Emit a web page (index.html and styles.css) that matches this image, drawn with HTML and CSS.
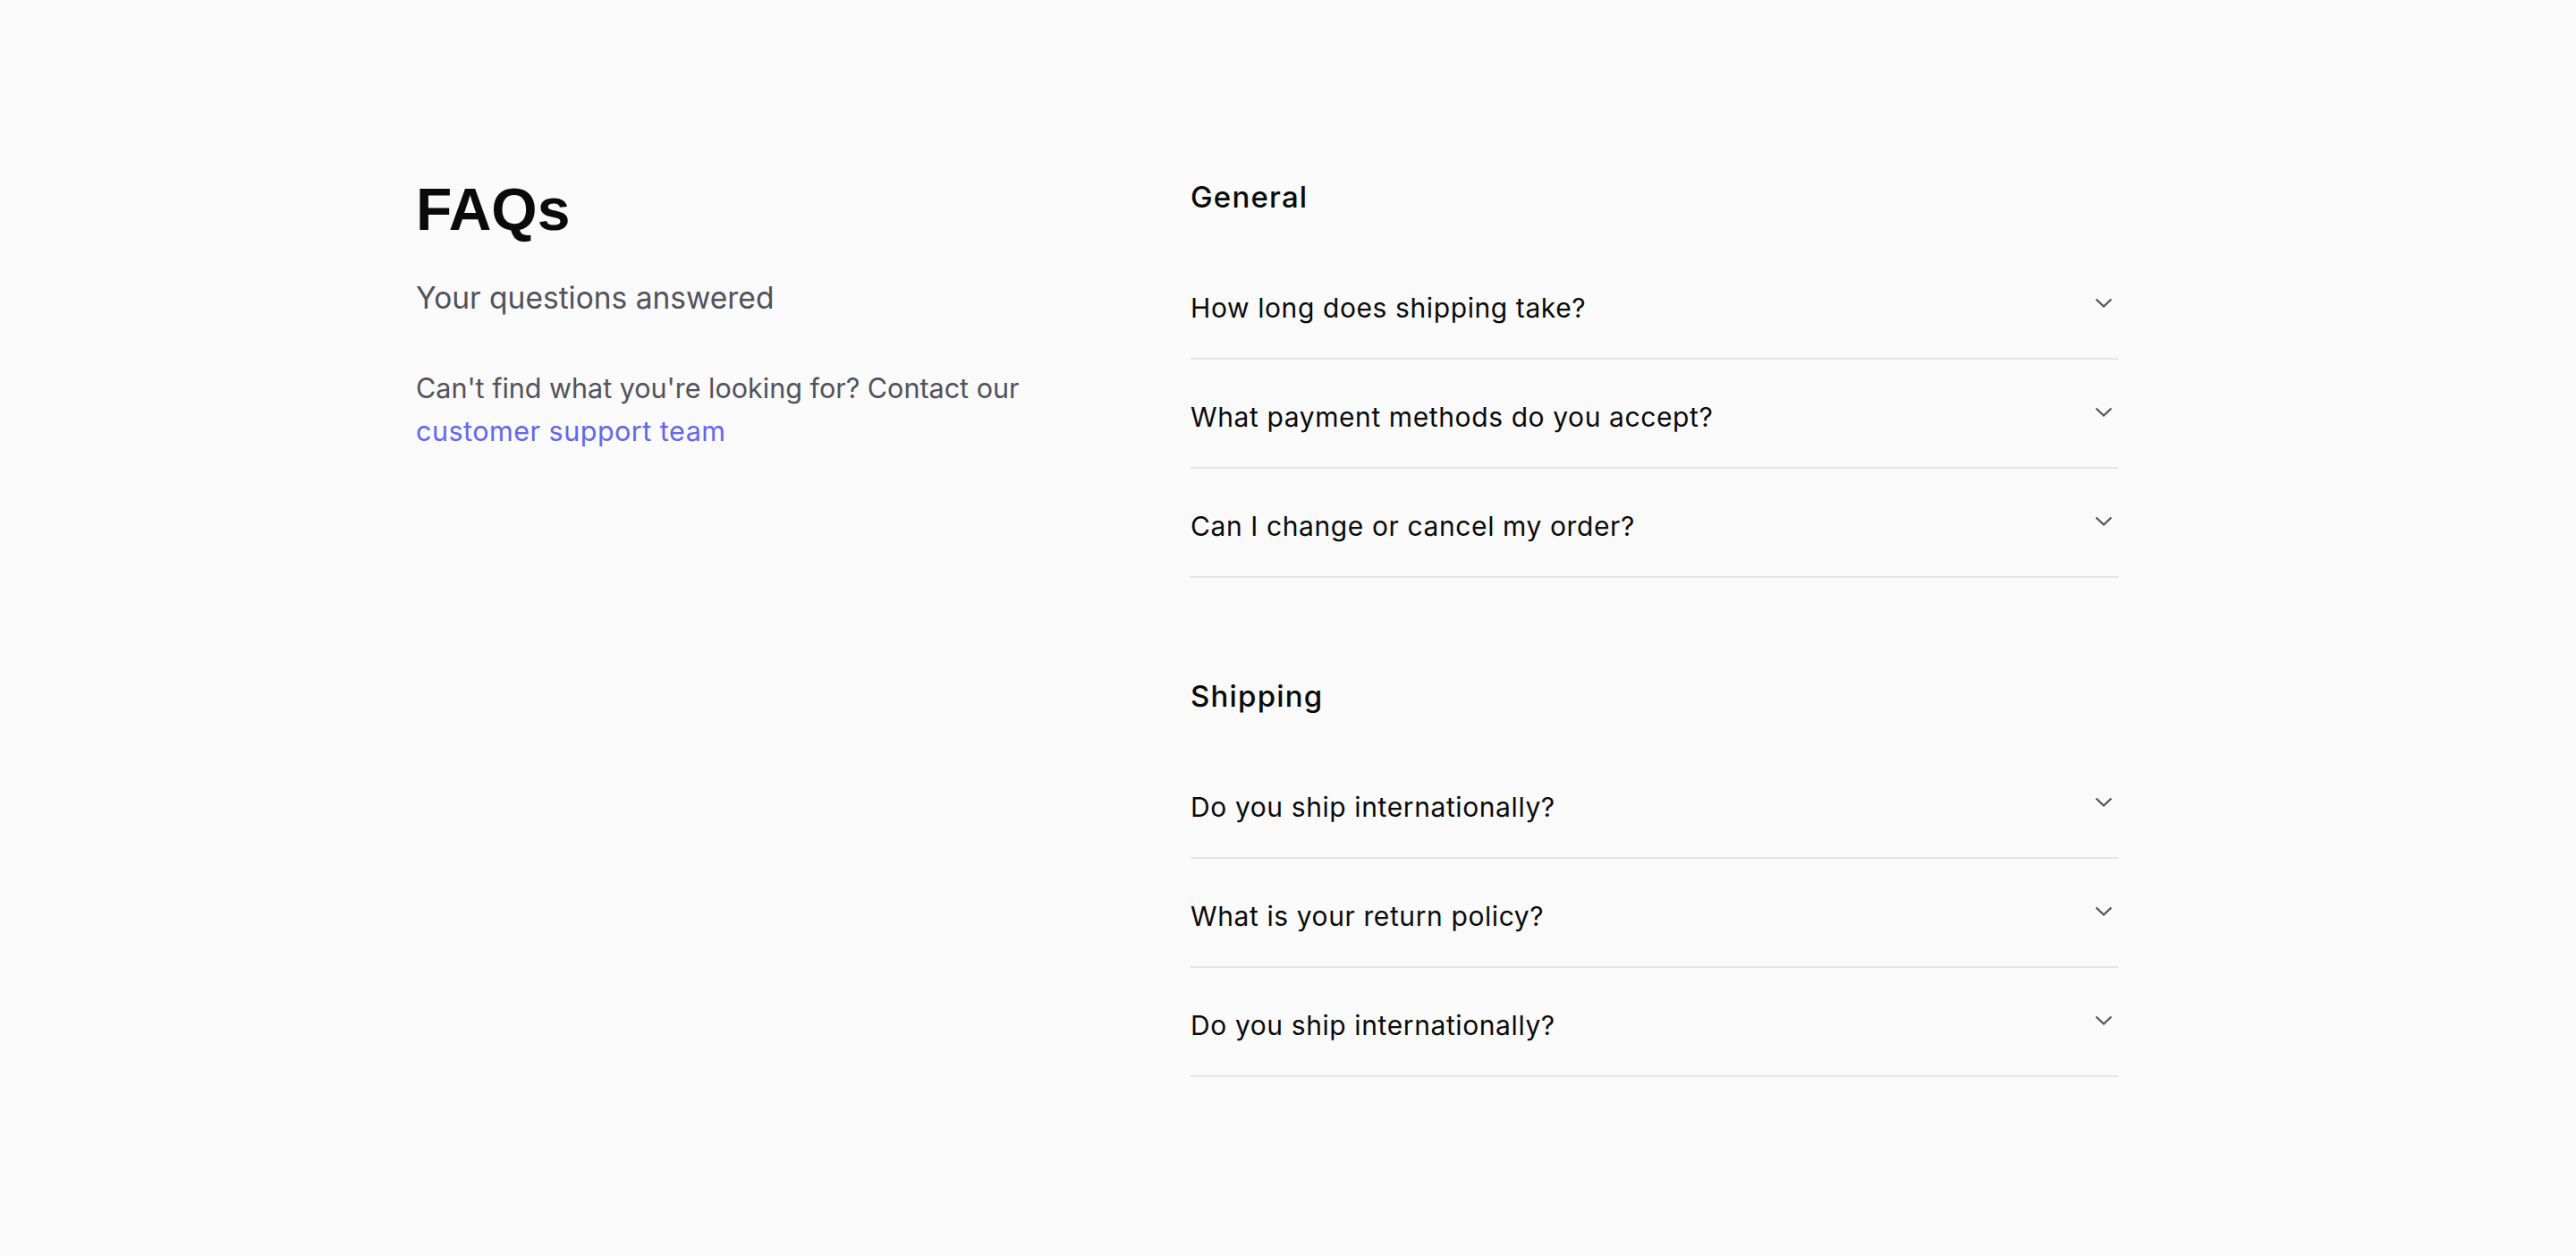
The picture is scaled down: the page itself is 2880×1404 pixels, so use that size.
FILE: index.html
```html
<!DOCTYPE html>
<html lang="en">
<head>
    <meta charset="UTF-8">
    <meta name="viewport" content="width=device-width, initial-scale=1.0">
    <title>FAQs</title>
    <link rel="stylesheet" href="styles.css">
</head>
<body>

    <div id="faq-page">

        <!-- intro column -->
        <div id="faq-intro">
            <h1>FAQs</h1>
            <p class="subtitle">Your questions answered</p>
            <p class="contact">Can't find what you're looking for? Contact our <a href="#">customer support team</a></p>
        </div>

        <!-- question lists -->
        <div id="faq-lists">
            <section class="faq-section">
                <h2>General</h2>
                <div class="faq-item">
                    <span>How long does shipping take?</span>
                    <svg class="chevron" viewBox="0 0 20 11"><polyline points="1.5,1.5 10,9.5 18.5,1.5"/></svg>
                </div>
                <div class="faq-item">
                    <span>What payment methods do you accept?</span>
                    <svg class="chevron" viewBox="0 0 20 11"><polyline points="1.5,1.5 10,9.5 18.5,1.5"/></svg>
                </div>
                <div class="faq-item">
                    <span>Can I change or cancel my order?</span>
                    <svg class="chevron" viewBox="0 0 20 11"><polyline points="1.5,1.5 10,9.5 18.5,1.5"/></svg>
                </div>
            </section>

            <section class="faq-section">
                <h2>Shipping</h2>
                <div class="faq-item">
                    <span>Do you ship internationally?</span>
                    <svg class="chevron" viewBox="0 0 20 11"><polyline points="1.5,1.5 10,9.5 18.5,1.5"/></svg>
                </div>
                <div class="faq-item">
                    <span>What is your return policy?</span>
                    <svg class="chevron" viewBox="0 0 20 11"><polyline points="1.5,1.5 10,9.5 18.5,1.5"/></svg>
                </div>
                <div class="faq-item">
                    <span>Do you ship internationally?</span>
                    <svg class="chevron" viewBox="0 0 20 11"><polyline points="1.5,1.5 10,9.5 18.5,1.5"/></svg>
                </div>
            </section>
        </div>

    </div>

</body>
</html>
```

FILE: styles.css
```css
body {
    font-family: Inter, "Noto Sans", sans-serif;
    margin: 0;
    padding: 0;
    background-color: #fafafa;
    color: #0a0a0a;
}

/* page layout */
#faq-page {
    max-width: 1950px;
    margin: 0 auto;
    padding: 201px 47px 120px 0;
    box-sizing: border-box;
    display: grid;
    grid-template-columns: 1fr 1037px;
}

/* intro column */
#faq-intro h1 {
    font-family: "Liberation Sans", Arial, sans-serif;
    font-size: 66px;
    font-weight: 700;
    line-height: 66px;
    margin: 0;
}

#faq-intro .subtitle {
    font-size: 33.5px;
    line-height: 40px;
    color: #52525b;
    margin: 46px 0 0;
}

#faq-intro .contact {
    max-width: 740px;
    font-size: 30.5px;
    line-height: 48px;
    color: #52525b;
    margin: 57px 0 0;
}

#faq-intro .contact a {
    color: #6366f1;
    letter-spacing: 0.5px;
    text-decoration: none;
}

/* question lists */
.faq-section + .faq-section {
    margin-top: 113px;
}

.faq-section h2 {
    font-size: 33px;
    font-weight: 500;
    letter-spacing: 1.2px;
    line-height: 39px;
    margin: 0 0 40px;
}

.faq-item {
    display: flex;
    justify-content: space-between;
    align-items: flex-start;
    padding: 46px 0 38px;
    border-bottom: 2px solid #e5e5e5;
    font-size: 30px;
    letter-spacing: 0.6px;
    line-height: 36px;
    cursor: pointer;
}

.chevron {
    width: 20px;
    height: 11px;
    margin: 7px 6px 0 0;
    fill: none;
    stroke: #52525b;
    stroke-width: 2.2;
}
```
